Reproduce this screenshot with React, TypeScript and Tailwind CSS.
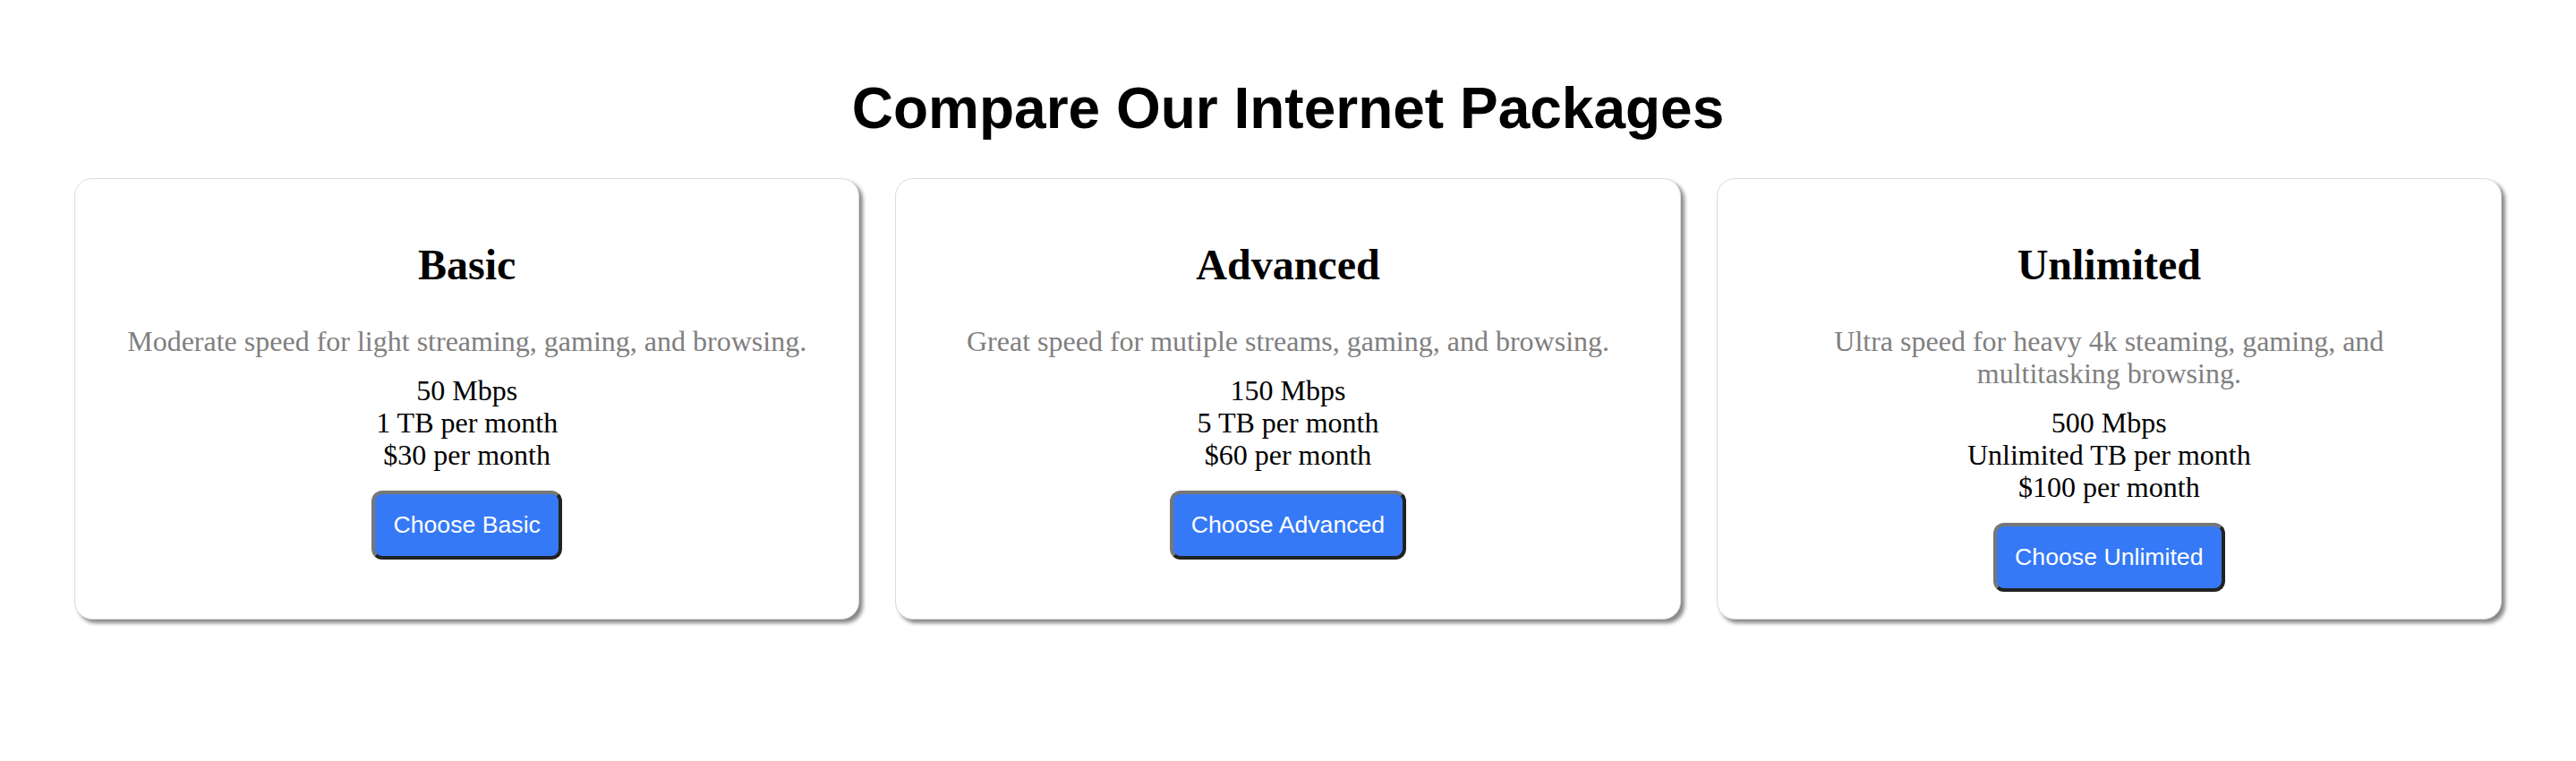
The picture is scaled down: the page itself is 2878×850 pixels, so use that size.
import React from "react";

const packages = [
  {
    name: "Basic",
    description: "Moderate speed for light streaming, gaming, and browsing.",
    speed: "50 Mbps",
    data: "1 TB per month",
    price: "$30 per month",
  },
  {
    name: "Advanced",
    description: "Great speed for mutiple streams, gaming, and browsing.",
    speed: "150 Mbps",
    data: "5 TB per month",
    price: "$60 per month",
  },
  {
    name: "Unlimited",
    description: "Ultra speed for heavy 4k steaming, gaming, and multitasking browsing.",
    speed: "500 Mbps",
    data: "Unlimited TB per month",
    price: "$100 per month",
  },
];

const PackageCard = ({ pkg }: { pkg: (typeof packages)[number] }) => (
  <div className="flex-1 min-w-0 bg-white border border-[#dcdcdc] rounded-[20px] shadow-[4px_4px_4px_#888] px-[50px] pt-[29px] pb-[30px] text-center font-['Liberation_Serif',serif]">
    <h2 className="mt-[40px] mb-[40px] text-[48px] leading-[54px] font-bold text-black">{pkg.name}</h2>
    <p className="text-[32px] leading-[36px] text-[#808080]">{pkg.description}</p>
    <div className="mt-[19px] text-[32px] leading-[36px] text-black">
      <p>{pkg.speed}</p>
      <p>{pkg.data}</p>
      <p>{pkg.price}</p>
    </div>
    <button className="mt-[22px] bg-[#3579f6] text-white font-['Liberation_Sans',Arial,sans-serif] text-[26.67px] leading-[31px] px-[20px] py-[19px] rounded-[12px] border-[4px] border-t-[#777] border-l-[#777] border-b-[#222] border-r-[#222]">
      Choose {pkg.name}
    </button>
  </div>
);

export default function App() {
  return (
    <div className="min-h-[850px] bg-white px-[83px] pt-[84px]">
      <h1 className="mb-[41px] text-center text-[64px] leading-[74px] font-bold text-black font-['Liberation_Sans',Arial,sans-serif]">
        Compare Our Internet Packages
      </h1>
      <div className="flex gap-[40px]">
        {packages.map((pkg) => (
          <PackageCard key={pkg.name} pkg={pkg} />
        ))}
      </div>
    </div>
  );
}
